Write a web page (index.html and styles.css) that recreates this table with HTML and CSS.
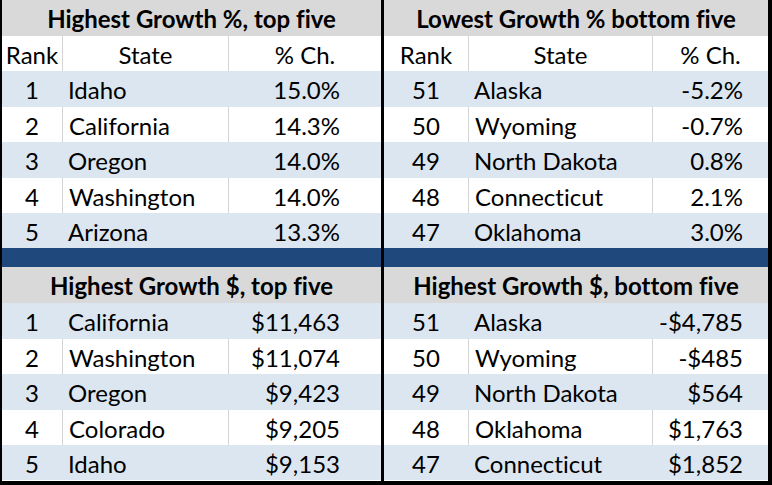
FILE: index.html
```html
<!DOCTYPE html>
<html>
<head>
<meta charset="utf-8">
<link rel="stylesheet" href="styles.css">
</head>
<body>
<div class="sheet">
  <section class="panel panel-left">
    <div class="title">Highest Growth %, top five</div>
    <div class="row head"><span>Rank</span><span>State</span><span>% Ch.</span></div>
    <div class="row alt"><span>1</span><span>Idaho</span><span>15.0%</span></div>
    <div class="row"><span>2</span><span>California</span><span>14.3%</span></div>
    <div class="row alt"><span>3</span><span>Oregon</span><span>14.0%</span></div>
    <div class="row"><span>4</span><span>Washington</span><span>14.0%</span></div>
    <div class="row alt"><span>5</span><span>Arizona</span><span>13.3%</span></div>
    <div class="band"></div>
    <div class="title">Highest Growth $, top five</div>
    <div class="row alt"><span>1</span><span>California</span><span>$11,463</span></div>
    <div class="row"><span>2</span><span>Washington</span><span>$11,074</span></div>
    <div class="row alt"><span>3</span><span>Oregon</span><span>$9,423</span></div>
    <div class="row"><span>4</span><span>Colorado</span><span>$9,205</span></div>
    <div class="row alt"><span>5</span><span>Idaho</span><span>$9,153</span></div>
  </section>
  <section class="panel panel-right">
    <div class="title">Lowest Growth % bottom five</div>
    <div class="row head"><span>Rank</span><span>State</span><span>% Ch.</span></div>
    <div class="row alt"><span>51</span><span>Alaska</span><span>-5.2%</span></div>
    <div class="row"><span>50</span><span>Wyoming</span><span>-0.7%</span></div>
    <div class="row alt"><span>49</span><span>North Dakota</span><span>0.8%</span></div>
    <div class="row"><span>48</span><span>Connecticut</span><span>2.1%</span></div>
    <div class="row alt"><span>47</span><span>Oklahoma</span><span>3.0%</span></div>
    <div class="band"></div>
    <div class="title">Highest Growth $, bottom five</div>
    <div class="row alt"><span>51</span><span>Alaska</span><span>-$4,785</span></div>
    <div class="row"><span>50</span><span>Wyoming</span><span>-$485</span></div>
    <div class="row alt"><span>49</span><span>North Dakota</span><span>$564</span></div>
    <div class="row"><span>48</span><span>Oklahoma</span><span>$1,763</span></div>
    <div class="row alt"><span>47</span><span>Connecticut</span><span>$1,852</span></div>
  </section>
</div>
</body>
</html>
```

FILE: styles.css
```css
html, body {
  margin: 0;
  padding: 0;
  background: #ffffff;
}
body {
  font-family: Lato, "Liberation Sans", sans-serif;
  font-size: 24px;
  color: #000000;
  font-variant-ligatures: none;
  font-feature-settings: "liga" 0, "dlig" 0;
}
.sheet {
  display: flex;
  width: 772px;
  height: 485px;
  box-sizing: border-box;
  border-left: 2px solid #000;
  border-right: 4px solid #000;
  border-bottom: 4px solid #000;
}
.panel {
  display: flex;
  flex-direction: column;
}
.panel-left {
  width: 382px;
  box-sizing: border-box;
  border-right: 3px solid #000;
  --cols: 60px 166px 153px;
  --pad-right: 41px;
}
.panel-right {
  width: 384px;
  --cols: 84px 184px 116px;
  --pad-right: 25px;
}
.title {
  height: 36px;
  background: #d9d9d9;
  font-weight: 700;
  text-align: center;
  line-height: 38px;
}
.band {
  height: 19px;
  background: #1f497d;
}
.row {
  display: grid;
  grid-template-columns: var(--cols);
  height: 35.4px;
  line-height: 37px;
  background: #ffffff;
}
.row.alt {
  background: #dce6f1;
}
.row span {
  box-sizing: border-box;
  white-space: nowrap;
}
.row span:nth-child(1) {
  text-align: center;
}
.row span:nth-child(2) {
  text-align: left;
  padding-left: 6px;
}
.row span:nth-child(3) {
  text-align: right;
  padding-right: var(--pad-right);
}
.row:not(.alt) span:nth-child(n+2) {
  border-left: 1px solid #d4d4d4;
}
.row.head span {
  text-align: center;
  padding: 0;
}
```
